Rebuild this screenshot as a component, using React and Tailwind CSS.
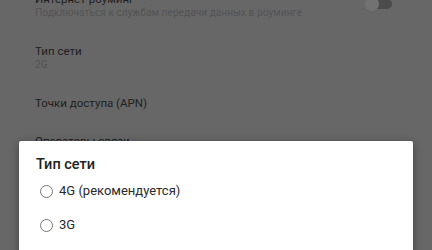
export default function App() {
  const rows = [
    { title: "Интернет-роуминг", sub: "Подключаться к службам передачи данных в роуминге", toggle: true },
    { title: "Тип сети", sub: "2G" },
    { title: "Точки доступа (APN)" },
    { title: "Операторы связи" },
  ];
  const options = ["4G (рекомендуется)", "3G"];

  return (
    <div className="relative w-[432px] h-[250px] overflow-hidden bg-[#676767] font-['Roboto','Liberation_Sans',sans-serif]">
      <div className="flex flex-col -mt-[20px]">
        {rows.map((r) => (
          <div
            key={r.title}
            className={`flex items-center justify-between pl-[35px] pr-[40px] ${r.sub ? "h-[52px]" : "h-[38px]"}`}
          >
            <div className="flex flex-col">
              <span className="text-[11.5px] leading-[14px] text-[#1f1f1f]">{r.title}</span>
              {r.sub && <span className="text-[10.2px] leading-[14px] text-[#535353]">{r.sub}</span>}
            </div>
            {r.toggle && (
              <div className="relative w-[26px] h-[10px] rounded-full bg-[#4b4b4b] -mt-[4px]">
                <div className="absolute -left-[1px] -top-[2px] w-[14px] h-[14px] rounded-full bg-[#727272]" />
              </div>
            )}
          </div>
        ))}
      </div>

      <div className="absolute left-[19px] top-[141px] w-[394px] h-[140px] bg-white rounded-[2px] shadow-[0_2px_8px_rgba(0,0,0,0.35)]">
        <div className="pt-[15px] pl-[17px] text-[14.5px] leading-[18px] font-medium text-[#222]">Тип сети</div>
        <div className="flex flex-col">
          {options.map((o) => (
            <div key={o} className="flex items-center h-[34px] pl-[21px] gap-[6px]">
              <span className="w-[13px] h-[13px] rounded-full border-[1.5px] border-[#777]" />
              <span className="text-[13px] text-[#2a2a2a]">{o}</span>
            </div>
          ))}
        </div>
      </div>
    </div>
  );
}
